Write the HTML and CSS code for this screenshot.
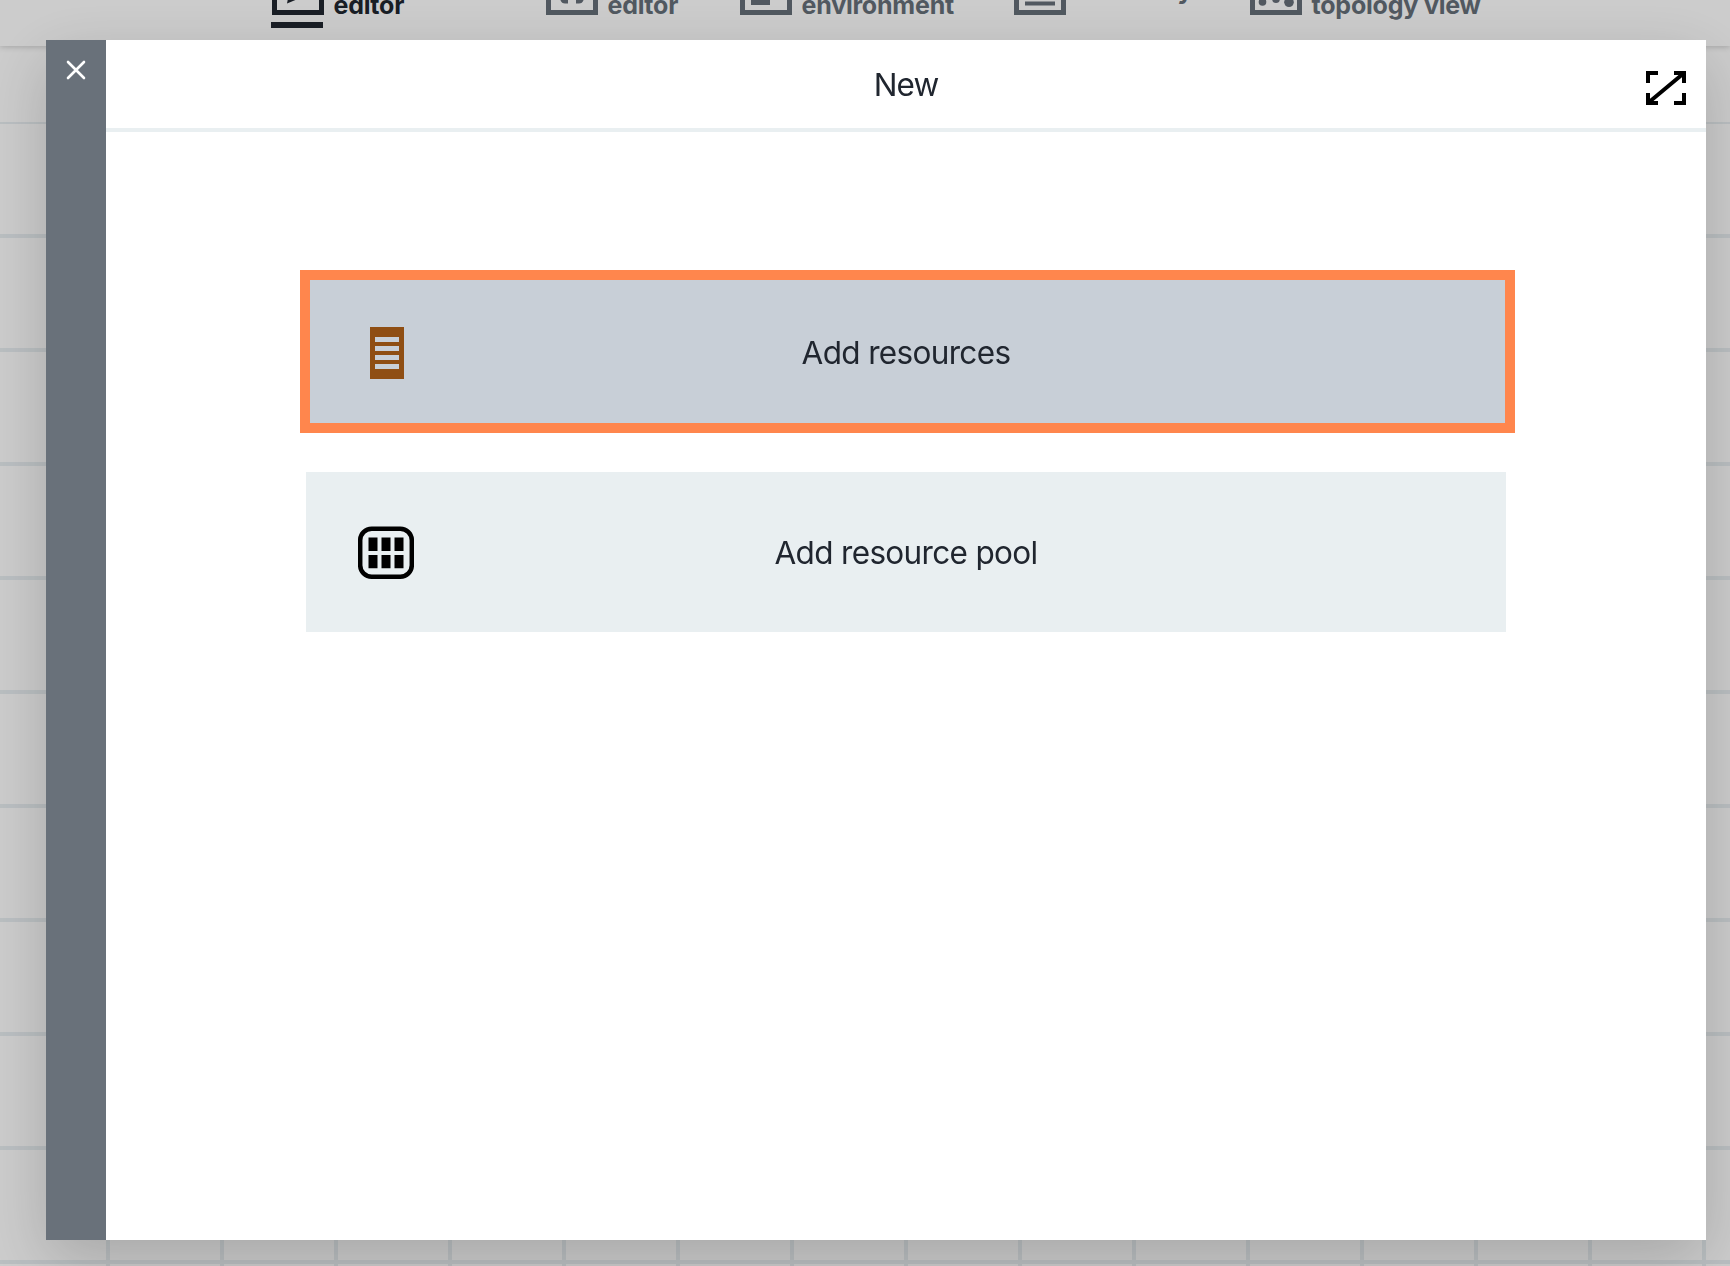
FILE: index.html
```html
<!DOCTYPE html>
<html lang="en">
<head>
<meta charset="utf-8">
<title>New</title>
<link rel="stylesheet" href="styles.css">
</head>
<body>
<div class="app">
  <header class="topbar">
    <nav class="tabs">
      <a class="tab tab-process active">
        <svg class="tab-icon" width="52" height="52" viewBox="0 0 52 52"><rect x="2.5" y="2.5" width="47" height="47" fill="none" stroke="currentColor" stroke-width="5"/><path d="M19 20L15 40.500L33 33z" fill="currentColor"/></svg>
        <span>editor</span>
      </a>
      <a class="tab tab-code">
        <svg class="tab-icon" width="52" height="52" viewBox="0 0 52 52"><rect x="2.5" y="2.5" width="47" height="47" fill="none" stroke="currentColor" stroke-width="5"/><path d="M14 28h8v12.500h-3q-4 0-5-5zM38 28h-8v12.500h3q4 0 5-5z" fill="currentColor"/></svg>
        <span>editor</span>
      </a>
      <a class="tab tab-env">
        <svg class="tab-icon" width="52" height="52" viewBox="0 0 52 52"><rect x="2.5" y="2.5" width="47" height="47" fill="none" stroke="currentColor" stroke-width="5"/><path d="M11 24h19v18H11z" fill="currentColor"/></svg>
        <span>environment</span>
      </a>
      <a class="tab tab-inventory">
        <svg class="tab-icon" width="52" height="52" viewBox="0 0 52 52"><rect x="2.5" y="2.5" width="47" height="47" fill="none" stroke="currentColor" stroke-width="5"/><path d="M11 28h30M11 40.500h30" stroke="currentColor" stroke-width="4"/></svg>
        <span class="raised">Inventory</span>
      </a>
      <a class="tab tab-topology">
        <svg class="tab-icon" width="52" height="52" viewBox="0 0 52 52"><rect x="2.5" y="2.5" width="47" height="47" fill="none" stroke="currentColor" stroke-width="5"/><path d="M13 39l6-12M39 39l-8-12" fill="none" stroke="currentColor" stroke-width="3"/><circle cx="12.500" cy="39" r="3.800"/><circle cx="26" cy="36.200" r="3.800"/><circle cx="39" cy="39.300" r="4.800"/></svg>
        <span>topology view</span>
      </a>
    </nav>
  </header>
  <div class="canvas"><div class="grid"></div></div>
</div>
<div class="overlay">
  <section class="modal">
    <aside class="rail">
      <svg width="20" height="20" viewBox="0 0 20 20"><path d="M2 2l16 16M18 2L2 18" stroke="#fff" stroke-width="2.600" stroke-linecap="round"/></svg>
    </aside>
    <div class="panel">
      <div class="panel-head">
        <h1>New</h1>
        <svg class="expand" width="40" height="34" viewBox="0 0 40 34"><path d="M2 12V2H12M28 2H38V12M38 22V32H28M12 32H2V22M2 32L38 2" fill="none" stroke="#000" stroke-width="4"/></svg>
      </div>
      <div class="choices">
        <button class="choice selected">
          <svg class="choice-icon" width="56" height="54" viewBox="0 0 56 54"><path fill="#8f4e13" fill-rule="evenodd" d="M12 1h34v52H12zM17 11v5h24v-5zM17 20v5h24v-5zM17 29v5h24v-5zM17 38v5h24v-5z"/></svg>
          <span>Add resources</span>
        </button>
        <button class="choice">
          <svg class="choice-icon" width="56" height="54" viewBox="0 0 56 54"><rect x="2.200" y="2.700" width="51.600" height="48.100" rx="11.500" fill="none" stroke="#000" stroke-width="4.500"/><path d="M10.500 11.500h9v13.500h-9zM23.500 11.500h9v13.500h-9zM36.500 11.500h9v13.500h-9zM10.500 29h9v13.300h-9zM23.500 29h9v13.300h-9zM36.500 29h9v13.300h-9z"/></svg>
          <span>Add resource pool</span>
        </button>
      </div>
    </div>
  </section>
</div>
</body>
</html>
```
FILE: styles.css
```css
* { box-sizing: border-box; }
body {
  margin: 0;
  width: 1730px;
  height: 1266px;
  overflow: hidden;
  font-family: Inter, "Liberation Sans", sans-serif;
  color: #20262f;
  background: #fff;
}
.app { display: flex; flex-direction: column; height: 1266px; }
.topbar {
  position: relative;
  z-index: 1;
  height: 46px;
  background: #fff;
  box-shadow: 0 1px 6px rgba(0, 0, 0, .2);
}
.tabs { display: flex; margin-top: -37px; padding-left: 272px; }
.tab {
  display: flex;
  height: 65px;
  gap: 9.500px;
  color: #666f79;
  fill: currentColor;
  font-size: 25px;
  font-weight: 700;
  letter-spacing: -.2px;
  line-height: 30px;
  white-space: nowrap;
}
.tab span { padding-top: 27px; }
.tab .raised { padding-top: 12px; letter-spacing: 0; }
.tab-icon { flex: none; }
.active {
  color: #20262f;
  background: linear-gradient(#20262f, #20262f) 0 100% / 52px 6px no-repeat;
  margin-left: -1px;
}
.active .tab-icon { margin-left: 1px; }
.tab-process { width: 275px; }
.tab-code { width: 194px; }
.tab-env { width: 274px; }
.tab-inventory { width: 236px; }
.canvas { flex: 1; padding-top: 76px; }
/* 114px cells ruled with 4px lines */
.grid {
  height: 1144px;
  background:
    linear-gradient(to bottom, #e9eff2 4px, transparent 4px) 106px 112px / 114px 114px,
    linear-gradient(to right, #e9eff2 4px, transparent 4px) 106px 112px / 114px 114px;
}
.overlay {
  position: fixed;
  z-index: 2;
  inset: 0;
  padding: 40px 24px 26px 46px;
  background: rgba(0, 0, 0, .2);
}
.modal {
  display: flex;
  height: 1200px;
  background: #fff;
  box-shadow: 0 20px 60px rgba(0, 0, 0, .19);
}
.rail {
  display: flex;
  justify-content: center;
  width: 60px;
  padding-top: 20px;
  background: #69717a;
}
.panel { flex: 1; }
.panel-head {
  display: grid;
  grid-template-columns: 60px 1fr 60px;
  height: 92px;
  border-bottom: 4px solid #e9eff1;
}
.panel-head h1 {
  grid-column: 2;
  margin: 0;
  font-size: 31.5px;
  font-weight: 420;
  letter-spacing: -.9px;
  line-height: 90px;
  text-align: center;
}
.expand { margin: 31px 0 0; }
.choices {
  display: flex;
  flex-direction: column;
  gap: 40px;
  padding: 140px 200px 0;
}
.choice {
  display: grid;
  grid-template-columns: 160px 1fr 160px;
  align-items: center;
  height: 160px;
  padding: 0;
  border: 0;
  background: #e9eff1;
  color: inherit;
  font: 420 31.5px Inter, "Liberation Sans", sans-serif;
  letter-spacing: -.66px;
}
.choice-icon { margin: 2px 0 0 52px; }
.selected {
  margin: -2px -9px -1px -6px;
  height: 163px;
  padding: 2px 3px 0 0;
  border: 10px solid #ff864d;
  background: #c8cfd7;
}
.selected .choice-icon { margin: 0 0 0 48px; }
```
